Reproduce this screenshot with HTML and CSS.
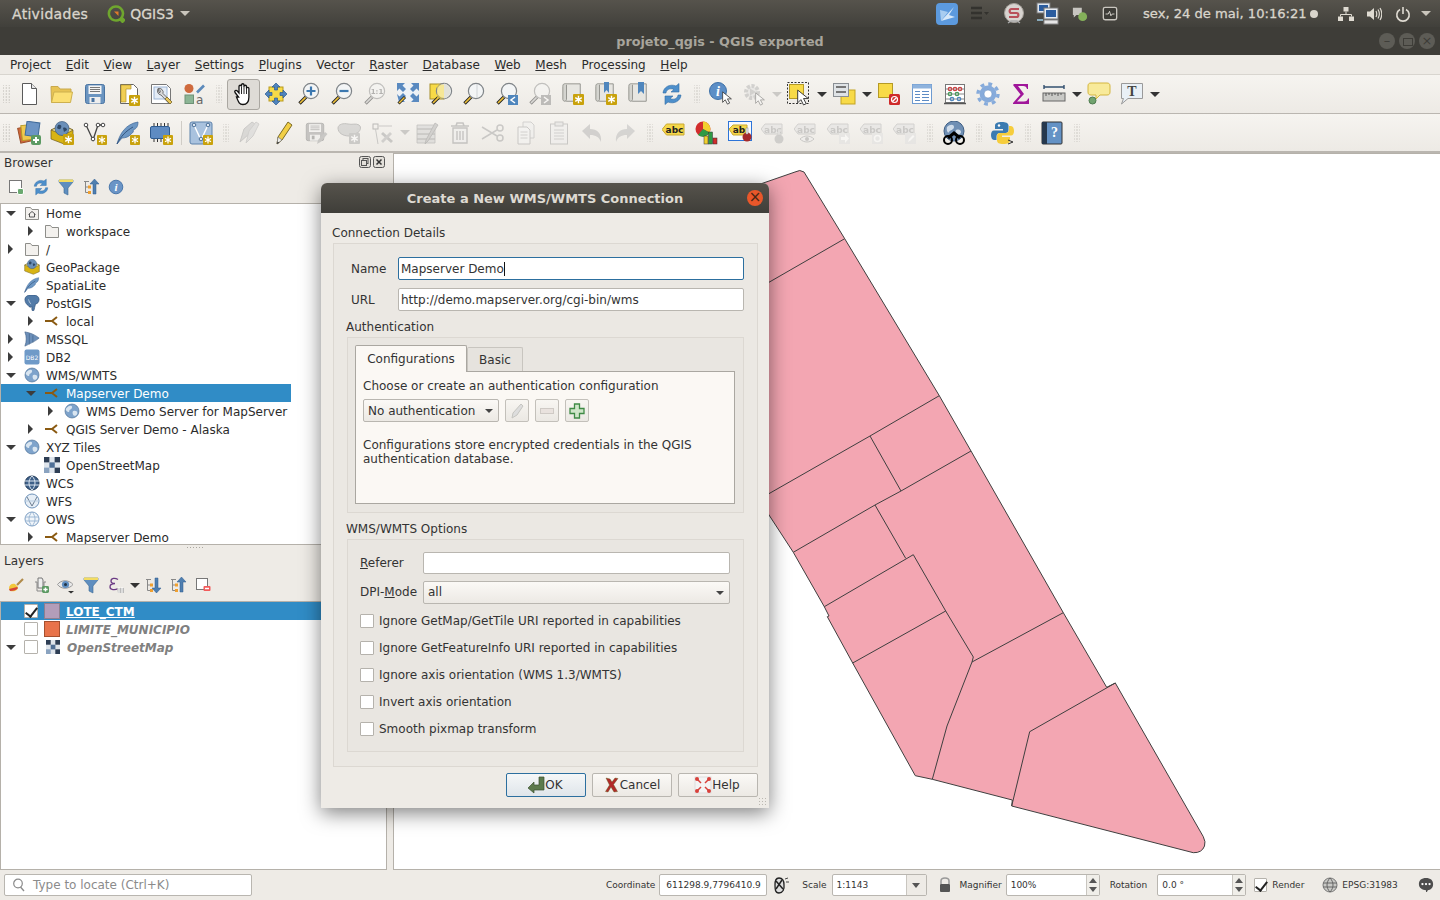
FILE: index.html
```html
<!DOCTYPE html>
<html lang="en">
<head>
    <meta charset="UTF-8">
    <meta name="viewport" content="width=device-width, initial-scale=1.0">
    <title>projeto_qgis - QGIS exported</title>
    <link rel="stylesheet" href="styles.css">
</head>
<body>
    <!-- icon sheet -->
    <svg class="sheet" xmlns="http://www.w3.org/2000/svg">
        <defs>
            <symbol id="badge" viewBox="0 0 10 10"><rect width="10" height="10" rx="1" fill="#c9a20c"/><path d="M5 1.5v7M2 3.2l6 3.6M8 3.2L2 6.8" stroke="#fff" stroke-width="1.3"/></symbol>
            <symbol id="plusbadge" viewBox="0 0 10 10"><rect width="10" height="10" rx="2" fill="#5c9a63"/><path d="M5 2v6M2 5h6" stroke="#fff" stroke-width="2"/></symbol>
            <symbol id="mag" viewBox="0 0 24 24"><path d="M9 15L2.5 21.5" stroke="#222" stroke-width="3.4"/><path d="M8.6 15.4L3 21" stroke="#f0c23a" stroke-width="1.6"/><circle cx="14" cy="9" r="7.6" fill="#f3f5f6" stroke="#7f8488" stroke-width="1.2"/></symbol>

            <symbol id="new" viewBox="0 0 24 24"><path d="M5.5 1.5h9l5 5v16h-14z" fill="#fff" stroke="#5a5a5a"/><path d="M14.5 1.5v5h5" fill="#e6e6e6" stroke="#5a5a5a"/></symbol>
            <symbol id="open" viewBox="0 0 24 24"><path d="M1.5 20.5L1 4.5h7l2 2.5h11v4" fill="#e7c354" stroke="#c9a94d"/><path d="M1.5 20.5L4 10h18.5l-2 10.5z" fill="#fbdf73" stroke="#cdb04f"/></symbol>
            <symbol id="save" viewBox="0 0 24 24"><rect x="2.5" y="2.5" width="19" height="19" rx="2" fill="#6a94c0" stroke="#4a74a2"/><rect x="5.5" y="3.5" width="13" height="8.5" fill="#f4f4f4"/><path d="M7 5.5h10M7 7.5h10M7 9.5h10" stroke="#777"/><rect x="6.5" y="15" width="11" height="6.5" fill="#eee"/><rect x="8.5" y="16" width="3" height="4" fill="#4a74a2"/></symbol>
            <symbol id="newlayout" viewBox="0 0 24 24"><path d="M4.5 2.5h13l4 4v15h-17z" fill="#fff" stroke="#666"/><path d="M5 3h10v4h-5v13H5z" fill="#f1cf55" stroke="#b4962d" stroke-width=".7"/><use href="#badge" x="13" y="13" width="11" height="11"/></symbol>
            <symbol id="layoutmgr" viewBox="0 0 24 24"><path d="M2.5 2.5h15l4 4v15h-19z" fill="#fff" stroke="#777"/><rect x="5" y="5" width="13" height="12" fill="#e4ecf6" stroke="#9db6d6"/><path d="M9 7a4 4 0 0 0 3 6l8 8.500 2-2-8-8a4 4 0 0 0-5-5l2.500 2.500-1 2z" fill="#d8d8d8" stroke="#555" stroke-width=".8"/><path d="M16 17l5 5 2-2-5-5z" fill="#e8c558" stroke="#6d5a1f" stroke-width=".7"/></symbol>
            <symbol id="style" viewBox="0 0 24 24"><circle cx="7" cy="6.500" r="4.500" fill="#cf6a3d"/><path d="M15 10.500l7-7" stroke="#5c8abb" stroke-width="2.600"/><rect x="3" y="13" width="8.500" height="8.500" fill="#8cb595" stroke="#6e9277"/><text x="14" y="22" class="svg-a">a</text></symbol>
            <symbol id="hand" viewBox="0 0 24 24"><path d="M7.500 15L4 10.500c-1-1.500 1-3 2.300-1.500L8 11V4.500c0-1.700 2.500-1.700 2.500 0V3c0-1.700 2.500-1.700 2.500 0v1.500c0-1.700 2.500-1.700 2.500 0V6.500c0-1.600 2.400-1.600 2.400 0V15c0 4.500-2 7.500-6 7.500-3.500 0-4.300-2-6.400-7.500z" fill="#fff" stroke="#111" stroke-width="1.300"/><path d="M10.500 4.500V12M13 4v8M15.500 5v7" stroke="#111" stroke-width=".9"/></symbol>
            <symbol id="pansel" viewBox="0 0 24 24"><rect x="5" y="5" width="14" height="14" fill="#f7da47" stroke="#b89a1c"/><g fill="#4f83bd" stroke="#2d5b8f" stroke-width=".7"><path d="M12 1l4 4h-2.500v3h-3V5H8z"/><path d="M12 23l4-4h-2.500v-3h-3v3H8z"/><path d="M1 12l4-4v2.500h3v3H5V16z"/><path d="M23 12l-4-4v2.500h-3v3h3V16z"/></g></symbol>
            <symbol id="zoomin" viewBox="0 0 24 24"><use href="#mag" width="24" height="24"/><path d="M14 4.500v9M9.500 9h9" stroke="#3c78b0" stroke-width="2.200"/></symbol>
            <symbol id="zoomout" viewBox="0 0 24 24"><use href="#mag" width="24" height="24"/><path d="M9.500 9h9" stroke="#3c78b0" stroke-width="2.200"/></symbol>
            <symbol id="zoom11" viewBox="0 0 24 24"><use href="#mag" width="24" height="24"/><text x="14" y="12" class="svg-11">1:1</text></symbol>
            <symbol id="zoomfull" viewBox="0 0 24 24"><rect x="1.500" y="1.500" width="21" height="18" fill="#eef2f6"/><g fill="#5a8ac0"><path d="M1 1h8L6.500 3.500 10 7 7 10 3.500 6.500 1 9z"/><path d="M23 1h-8l2.500 2.500L14 7l3 3 3.500-3.500L23 9z"/><path d="M23 20h-8l2.500-2.500L14 14l3-3 3.500 3.500L23 12z"/><path d="M1 12l2.500 2.500L7 11l3 3-3.500 3.500L9 20H3z"/></g><path d="M9 15L2.500 21.500" stroke="#222" stroke-width="3"/><path d="M8.500 15.500L3 21" stroke="#f0c23a" stroke-width="1.400"/></symbol>
            <symbol id="zoomsel" viewBox="0 0 24 24"><rect x="1" y="2" width="14" height="15" fill="#f7da47" stroke="#a68e2a"/><use href="#mag" x="1" y="0" width="24" height="24"/><path d="M15 1.500a7.600 7.600 0 0 1 0 15z" fill="#e2e2da"/><path d="M8 2.500h7v14H8z" fill="#f7da47" opacity=".55"/></symbol>
            <symbol id="zoomlayer" viewBox="0 0 24 24"><use href="#mag" width="24" height="24"/><path d="M15 2v14" stroke="#cfd3d6"/></symbol>
            <symbol id="zoomlast" viewBox="0 0 24 24"><use href="#mag" width="24" height="24"/><rect x="13" y="13" width="10" height="10" fill="#4f86bd"/><path d="M20 15l-4 3 4 3" fill="none" stroke="#fff" stroke-width="1.500"/></symbol>
            <symbol id="zoomnext" viewBox="0 0 24 24"><use href="#mag" width="24" height="24"/><rect x="13" y="13" width="10" height="10" fill="#4f86bd"/><path d="M16 15l4 3-4 3" fill="none" stroke="#fff" stroke-width="1.500"/></symbol>
            <symbol id="scroll" viewBox="0 0 24 24"><path d="M4 2h17v19H6.500C5 21 4 20 4 18z" fill="#e7e6e1" stroke="#8f8f8a"/><path d="M4 2c-2 0-2 2-2 3v14c0 1 1 2 2 2 1 0 2-1 2-2V3" fill="#d4d4cf" stroke="#8f8f8a"/></symbol>
            <symbol id="bmnew" viewBox="0 0 24 24"><use href="#scroll" width="22" height="22"/><use href="#badge" x="12" y="12" width="11" height="11"/></symbol>
            <symbol id="bmshow" viewBox="0 0 24 24"><use href="#scroll" width="22" height="22"/><path d="M10 0h5v11l-2.500-3L10 11z" fill="#4f86bd"/><use href="#badge" x="12" y="12" width="11" height="11"/></symbol>
            <symbol id="bmlist" viewBox="0 0 24 24"><use href="#scroll" width="22" height="22"/><path d="M11 0h6v12l-3-3-3 3z" fill="#4f86bd"/></symbol>
            <symbol id="refresh" viewBox="0 0 24 24"><path d="M3 11C3.500 5 10 1.500 16 4l3-2.500V10h-8l3-2.500C10 5.500 6 8 6 11z" fill="#4d8fcb" stroke="#2f6ba5" stroke-width=".6"/><path d="M21 13c-.5 6-7 9.500-13 7l-3 2.500V14h8l-3 2.500c4 2 8-.5 8-3.500z" fill="#4d8fcb" stroke="#2f6ba5" stroke-width=".6"/></symbol>
            <symbol id="cursor" viewBox="0 0 12 16"><path d="M1 1v12l3-3 2.500 5 2.500-1.200L6.500 9H11z" fill="#fff" stroke="#333" stroke-width=".9"/></symbol>
            <symbol id="identify" viewBox="0 0 24 24"><circle cx="9" cy="9" r="8.500" fill="#5c8ec6" stroke="#3f71a8"/><text x="9" y="14" class="svg-i">i</text><use href="#cursor" x="12" y="9" width="12" height="14"/></symbol>
            <symbol id="action" viewBox="0 0 24 24"><circle cx="10" cy="10" r="6" fill="#ddd" stroke="#aaa" stroke-width="4" stroke-dasharray="3 1.500"/><path d="M8 6.500l6 3.500-6 3.500z" fill="#aaa"/><use href="#cursor" x="12" y="10" width="12" height="14"/></symbol>
            <symbol id="select" viewBox="0 0 24 24"><rect x=".5" y=".5" width="21" height="21" fill="none" stroke="#333" stroke-dasharray="2 1.500"/><rect x="2.500" y="2.500" width="14" height="14" fill="#f8da47" stroke="#b59a25"/><use href="#cursor" x="9" y="7" width="14" height="17"/></symbol>
            <symbol id="selectform" viewBox="0 0 24 24"><rect x="9" y="8" width="14" height="14" fill="#f8da47" stroke="#c3a322"/><rect x="1.500" y="1.500" width="15" height="13" fill="#dfe3e6" stroke="#8a8f94"/><path d="M4 5h10M4 10h10" stroke="#777" stroke-width="2"/></symbol>
            <symbol id="deselect" viewBox="0 0 24 24"><rect x="1.500" y="1.500" width="14" height="14" fill="#f8da47" stroke="#b59a25"/><rect x="12" y="12" width="11" height="11" rx="1.500" fill="#cf2a2a"/><circle cx="17.500" cy="17.500" r="3" fill="none" stroke="#fff" stroke-width="1.200"/><path d="M15.500 19.500l4-4" stroke="#fff" stroke-width="1.200"/></symbol>
            <symbol id="attr" viewBox="0 0 24 24"><rect x="2.500" y="2.500" width="19" height="19" fill="#fff" stroke="#6d9ad0"/><rect x="2.500" y="2.500" width="19" height="4" fill="#8fb3dd"/><path d="M5 9.500h5M12 9.500h7M5 12.500h5M12 12.500h7M5 15.500h5M12 15.500h7M5 18.500h5M12 18.500h7" stroke="#5e8cc4"/></symbol>
            <symbol id="stats" viewBox="0 0 24 24"><rect x="2.500" y="2.500" width="19" height="18" fill="#fff" stroke="#777"/><path d="M1 21.500h22" stroke="#555" stroke-width="1.500"/><path d="M3 7h18M3 12h18M3 17h18" stroke="#888"/><g fill="none" stroke-width="1.300"><circle cx="7" cy="7" r="1.700" stroke="#c44"/><circle cx="12" cy="7" r="1.700" stroke="#c44"/><circle cx="17" cy="7" r="1.700" stroke="#c44"/><circle cx="7" cy="12" r="1.700" stroke="#4a9a5c"/><circle cx="14" cy="12" r="1.700" stroke="#4a9a5c"/><circle cx="9" cy="17" r="1.700" stroke="#4f86bd"/><circle cx="16" cy="17" r="1.700" stroke="#4f86bd"/></g></symbol>
            <symbol id="toolbox" viewBox="0 0 24 24"><circle cx="12" cy="12" r="10" fill="none" stroke="#86abdb" stroke-width="3.400" stroke-dasharray="3.800 4.050"/><circle cx="12" cy="12" r="6.200" fill="#fff" stroke="#86abdb" stroke-width="4.400"/><circle cx="12" cy="12" r="4" fill="none" stroke="#5f88bd" stroke-width=".5"/></symbol>
            <symbol id="sigma" viewBox="0 0 24 24"><path d="M5 2h14v5h-1c-.5-2-1.500-3-4-3H9l6 8-7 7.500h7c2.500 0 3.500-1 4-3h1V22H4v-1l7.500-8.500L4 3z" fill="#a0169a"/></symbol>
            <symbol id="ruler" viewBox="0 0 24 24"><path d="M2 5h20M2 3v4M22 3v4" stroke="#33506f" stroke-width="1.400"/><rect x="1" y="11" width="22" height="8" fill="#c9c9c6" stroke="#666"/><path d="M4 11v3M7 11v2M10 11v3M13 11v2M16 11v3M19 11v2" stroke="#555"/></symbol>
            <symbol id="note" viewBox="0 0 24 24"><path d="M4 1h16c2 0 3 1 3 3v6c0 2-1 3-3 3h-7l-4 4v-4H4c-2 0-3-1-3-3V4c0-2 1-3 3-3z" fill="#f8ea9a" stroke="#d4b63e"/><circle cx="5.500" cy="18.500" r="3.500" fill="#71a36f" stroke="#4e7b4f"/></symbol>
            <symbol id="textann" viewBox="0 0 24 24"><path d="M1.500 1.500h21v15H8L1.500 22l2-5.500h-2z" fill="#e9f0f6" stroke="#9a9a9a"/><text x="12" y="14" class="svg-t">T</text></symbol>

            <symbol id="addlayers" viewBox="0 0 24 24"><rect x="2" y="6" width="12" height="15" transform="rotate(-12 8 13)" fill="#d0683a" stroke="#9d4d28"/><rect x="4.500" y="4" width="13" height="15" transform="rotate(-6 10 11)" fill="#f0c84d" stroke="#b59a25"/><rect x="9" y="1" width="13" height="14" transform="rotate(8 15 8)" fill="#6c94c4" stroke="#3f6a9a"/><use href="#plusbadge" x="14" y="14" width="10" height="10"/></symbol>
            <symbol id="gpkgbox" viewBox="0 0 24 24"><path d="M1 9l11-5 11 5v10l-9 4-13-5z" fill="#d8b414" stroke="#6d5a1f" stroke-width=".7"/><path d="M1 9l13 5 9-5-11-5z" fill="#f3e59a" stroke="#6d5a1f" stroke-width=".7"/><circle cx="12" cy="7.500" r="7" fill="#6a8fb9" stroke="#3f5d80" stroke-width=".7"/><path d="M8 4c3-1 4 1 3 3s-3 1-4 0M13 7c2-1 4 0 4 2l-3 2z" fill="#2f4866"/></symbol>
            <symbol id="gpkg" viewBox="0 0 24 24"><use href="#gpkgbox" width="24" height="24"/><use href="#badge" x="13" y="13" width="11" height="11"/></symbol>
            <symbol id="vline" viewBox="0 0 24 24"><path d="M3 4l7 15 5-15h5" fill="none" stroke="#444" stroke-width="1.300"/><g fill="#fff" stroke="#444"><circle cx="3" cy="4" r="1.800"/><circle cx="10" cy="18" r="1.800"/><circle cx="15" cy="4" r="1.800"/><circle cx="20" cy="4" r="1.800"/></g><use href="#badge" x="14" y="14" width="10" height="10"/></symbol>
            <symbol id="feather" viewBox="0 0 24 24"><path d="M1 23C4 12 10 3 22 1c0 5-2 7-5 8 1 1 0 3-2 4-2 3-6 4-9 4z" fill="#6d97c4" stroke="#41699a" stroke-width=".7"/><path d="M1 23C5 15 10 10 17 6" fill="none" stroke="#2f4f78" stroke-width=".9"/></symbol>
            <symbol id="feathernew" viewBox="0 0 24 24"><use href="#feather" width="24" height="24"/><use href="#badge" x="14" y="14" width="10" height="10"/></symbol>
            <symbol id="chip" viewBox="0 0 24 24"><rect x="1.500" y="5.500" width="19" height="12" rx="1.500" fill="#5e8bc2" stroke="#2f5b8f"/><path d="M5 2v3M8.500 2v3M12 2v3M15.500 2v3M19 2v3M5 18v3M8.500 18v3M12 18v3" stroke="#333"/><use href="#badge" x="14" y="14" width="10" height="10"/></symbol>
            <symbol id="vbox" viewBox="0 0 24 24"><rect x="1" y="1" width="22" height="22" rx="2" fill="#a9c2de" stroke="#5d82ab"/><path d="M5 4l7 15 7-15" fill="none" stroke="#fff" stroke-width="1.400"/><g fill="#dfe8f2" stroke="#4b6f97"><circle cx="5" cy="4" r="1.800"/><circle cx="12" cy="18" r="1.800"/><circle cx="19" cy="4" r="1.800"/></g><use href="#badge" x="14" y="14" width="10" height="10"/></symbol>
            <symbol id="pencils" viewBox="0 0 24 24"><path d="M2 21L6 8l8-7 3 2-6 10z" fill="#bbb" stroke="#999"/><path d="M8 22l3-12 7-9 3 2-6 12z" fill="#ccc" stroke="#aaa"/></symbol>
            <symbol id="pencil" viewBox="0 0 24 24"><path d="M6 23l1-7L17 1l4 3L11 19z" fill="#f2cf45" stroke="#7a6a25"/><path d="M6 23l1-7 4 3z" fill="#eee" stroke="#777" stroke-width=".7"/><path d="M6 23l.4-2.500 2 1.300z" fill="#333"/></symbol>
            <symbol id="editsave" viewBox="0 0 24 24"><use href="#save" width="22" height="22"/><path d="M13 23l1-4 7-8 2.500 2-7 8z" fill="#999"/></symbol>
            <symbol id="blob" viewBox="0 0 24 24"><path d="M1 7c0-4 6-5 10-4s8-1 11 1 1 7-2 8-2 3-8 3-11-3-11-8z" fill="#bbb" stroke="#888"/><use href="#badge" x="12" y="12" width="11" height="11"/></symbol>
            <symbol id="vtool" viewBox="0 0 24 24"><rect x="3" y="3" width="5" height="5" fill="none" stroke="#777"/><path d="M9 5h13M5.500 8L8 23" stroke="#999"/><path d="M11 13l10 9 2-2-10-9z" fill="#999"/><path d="M11 20l9-9 2 2-9 9z" fill="#aaa"/></symbol>
            <symbol id="edittable" viewBox="0 0 24 24"><path d="M2 4h18v4H2zM2 8h18v5H2zM2 13h18v5H2zM2 18h18v4H2z" fill="#ccc" stroke="#888" stroke-width=".8"/><path d="M10 23l1-4L20 2l3 2-10 16z" fill="#aaa" stroke="#777" stroke-width=".8"/></symbol>
            <symbol id="trash" viewBox="0 0 24 24"><path d="M3 5h18M8 5l1-3h6l1 3" fill="none" stroke="#a88" stroke-width="1.600"/><path d="M5 7h14v15H5z" fill="#eee" stroke="#a88" stroke-width="1.400"/><path d="M9 10v9M12 10v9M15 10v9" stroke="#a88" stroke-width="1.400"/></symbol>
            <symbol id="scissors" viewBox="0 0 24 24"><path d="M1 6l15 9M1 18l15-9" stroke="#999" stroke-width="1.500"/><circle cx="19" cy="7" r="3" fill="none" stroke="#999" stroke-width="1.500"/><circle cx="19" cy="17" r="3" fill="none" stroke="#999" stroke-width="1.500"/></symbol>
            <symbol id="copy" viewBox="0 0 24 24"><path d="M9 1h8l3 3v13H9z" fill="#eee" stroke="#aaa"/><path d="M4 6h9l3 3v14H4z" fill="#f5f5f5" stroke="#999"/><path d="M6.500 11h7M6.500 14h7M6.500 17h7" stroke="#aaa"/></symbol>
            <symbol id="paste" viewBox="0 0 24 24"><rect x="3.500" y="3" width="17" height="20" fill="#eee" stroke="#999"/><rect x="8" y="1" width="8" height="4" fill="#ddd" stroke="#999"/><path d="M7 9h10M7 12h10M7 15h10M7 18h10" stroke="#aaa"/></symbol>
            <symbol id="undo" viewBox="0 0 24 24"><path d="M2 10l8-7v5c7 0 12 4 11 13-2-5-5-7-11-7v4z" fill="#b3aaa0"/></symbol>
            <symbol id="redo" viewBox="0 0 24 24"><path d="M22 10l-8-7v5C7 8 2 12 3 21c2-5 5-7 11-7v4z" fill="#b3b3ab"/></symbol>
            <symbol id="abc" viewBox="0 0 24 24"><path d="M0 8.500L4.500 3H22v11H4.500z" fill="#f6d84a" stroke="#c9a933"/><text x="12.500" y="12" class="svg-abc">abc</text></symbol>
            <symbol id="chart" viewBox="0 0 24 24"><circle cx="8" cy="8" r="7.500" fill="#d22d2d"/><path d="M8 8V.5a7.500 7.500 0 0 1 6.500 11z" fill="#f2d02e"/><path d="M8 8l6.500 3.500A7.500 7.500 0 0 1 3 14z" fill="#2f9a45"/><rect x="9" y="15" width="4" height="8" fill="#f2d02e" stroke="#333" stroke-width=".5"/><rect x="13.500" y="11" width="4" height="12" fill="#2f9a45" stroke="#333" stroke-width=".5"/><rect x="18" y="17" width="4" height="6" fill="#d22d2d" stroke="#333" stroke-width=".5"/></symbol>
            <symbol id="abcpin" viewBox="0 0 24 24"><rect x=".5" y=".5" width="23" height="19" fill="#f9fbff" stroke="#2d74d8" stroke-width="1"/><path d="M1 8l4-4h14v10H5z" fill="#f6d84a" stroke="#c9a933"/><text x="11" y="12" class="svg-abc">ab</text><circle cx="19" cy="16" r="4.500" fill="#a52a2a"/><rect x="18" y="7" width="2" height="6" fill="#eee" stroke="#888" stroke-width=".5"/></symbol>
            <symbol id="abcgrey" viewBox="0 0 24 24"><path d="M0 8L4 3h17v10H4z" fill="#ddd" stroke="#aaa"/><text x="12" y="11.500" class="svg-abc grey">abc</text></symbol>
            <symbol id="abcpin2" viewBox="0 0 24 24"><use href="#abcgrey" width="24" height="24"/><circle cx="18" cy="18" r="4.500" fill="#b0a5a5"/><rect x="17" y="8" width="2" height="6" fill="#ddd" stroke="#999" stroke-width=".5"/></symbol>
            <symbol id="abceye" viewBox="0 0 24 24"><use href="#abcgrey" width="24" height="24"/><path d="M6 18c4-4 10-4 14 0-4 4-10 4-14 0z" fill="#eee" stroke="#999"/><circle cx="13" cy="18" r="2" fill="#999"/></symbol>
            <symbol id="abcmove" viewBox="0 0 24 24"><use href="#abcgrey" width="24" height="24"/><rect x="12" y="12" width="11" height="11" fill="#ddd"/><path d="M14 16h4v-3l4 4.500-4 4.500v-3h-4z" fill="#fff"/></symbol>
            <symbol id="abcrot" viewBox="0 0 24 24"><use href="#abcgrey" width="24" height="24"/><rect x="12" y="12" width="11" height="11" fill="#ddd"/><circle cx="17.500" cy="17.500" r="3" fill="none" stroke="#fff" stroke-width="1.600"/></symbol>
            <symbol id="abcedit" viewBox="0 0 24 24"><use href="#abcgrey" width="24" height="24"/><rect x="12" y="12" width="11" height="11" fill="#ddd"/><path d="M15 21l1-3 4-4 1.500 1.500-4 4z" fill="#fff"/></symbol>
            <symbol id="globe" viewBox="0 0 24 24"><circle cx="12" cy="12" r="10.500" fill="#7ea3cb" stroke="#4c6f96"/><path d="M7 5c3-2 6-1 5 2s-4 2-4 5-4 1-5-1 2-5 4-6zM14 12c3-1 6 0 6 3s-3 5-5 4-3-6-1-7z" fill="#d9e5f0"/></symbol>
            <symbol id="bikeglobe" viewBox="0 0 24 24"><circle cx="12" cy="10" r="10" fill="#6f8fb4" stroke="#3f5f85"/><path d="M5 6c3-3 7-3 7 0s-4 3-5 5-3-2-2-5zM14 9c3-1 5 0 5 2s-3 3-4 2-2-3-1-4z" fill="#cfdcea"/><circle cx="6" cy="19" r="4" fill="none" stroke="#000" stroke-width="2"/><circle cx="18" cy="19" r="4" fill="none" stroke="#000" stroke-width="2"/><path d="M6 17l6-5 6 5" fill="none" stroke="#000" stroke-width="3"/></symbol>
            <symbol id="python" viewBox="0 0 24 24"><path d="M11 1c-5 0-7 1-7 4v3h8v1.500H3c-2 0-3 2-3 4.500s1 5 3 5h2.500v-3.500c0-2 1.500-3.500 3.500-3.500h5.500c2 0 3-1 3-3V4.500C17.500 2 14.500 1 11 1z" fill="#3b7bb1"/><path d="M12 23c5 0 7-1 7-4v-3h-8v-1.500h9c2 0 3-2 3-4.500s-1-5-3-5h-2v3.500c0 2-1.500 3.500-3.500 3.500H9c-2 0-3 1-3 3v4.500c0 2.500 2.500 3.500 6 3.500z" fill="#f6cd3c"/><circle cx="8" cy="4.500" r="1.200" fill="#fff"/><path d="M17 19l5 2-5 2" fill="none" stroke="#333"/></symbol>
            <symbol id="helpbook" viewBox="0 0 24 24"><rect x="2" y="1" width="20" height="22" rx="1" fill="#6492c5" stroke="#333"/><rect x="2" y="1" width="5" height="22" fill="#26384d"/><text x="14.500" y="16" class="svg-q">?</text></symbol>

            <symbol id="addrect" viewBox="0 0 18 18"><rect x="2.500" y="2.500" width="12" height="12" fill="#fff" stroke="#777"/><rect x="10.500" y="10.500" width="6" height="6" rx="1.500" fill="#6aa96f" stroke="#fff"/></symbol>
            <symbol id="filter" viewBox="0 0 18 18"><path d="M2 2h14v2l-5 6v7l-4-2v-5L2 4z" fill="#5f8ebf" stroke="#3b6996" stroke-width=".6"/><rect x="2" y="1.500" width="14" height="2.500" fill="#f3dc62"/></symbol>
            <symbol id="collapseup" viewBox="0 0 18 18"><path d="M2 3.500h5M3.500 3.500v11h4M3.500 9h4" fill="none" stroke="#888"/><rect x="6" y="7.500" width="3" height="3" fill="#f0a030"/><rect x="6" y="13" width="3" height="3" fill="#f0a030"/><path d="M12.500 1L17 6h-3v10h-3V6H8z" fill="#4f7fb0" stroke="#2d5b8f" stroke-width=".5"/></symbol>
            <symbol id="expanddown" viewBox="0 0 18 18"><path d="M2 3.500h5M3.500 3.500v11h4M3.500 9h4" fill="none" stroke="#888"/><rect x="6" y="7.500" width="3" height="3" fill="#f0a030"/><rect x="6" y="13" width="3" height="3" fill="#f0a030"/><path d="M12.500 17L17 12h-3V2h-3v10H8z" fill="#4f7fb0" stroke="#2d5b8f" stroke-width=".5"/></symbol>
            <symbol id="info" viewBox="0 0 18 18"><circle cx="9" cy="9" r="6.800" fill="#6a94c6" stroke="#4a77ab"/><text x="9" y="12.500" class="svg-i small">i</text></symbol>
            <symbol id="brush" viewBox="0 0 18 18"><path d="M2 12c0-3 3-5 6-4l3 3c0 3-3 5-8 4z" fill="#f2c83a"/><path d="M2 13l8-2 1 1c-1 2-4 3-8 3z" fill="#d4453a"/><path d="M10 9l6-6" stroke="#b08a4a" stroke-width="2.200"/></symbol>
            <symbol id="addgroup" viewBox="0 0 18 18"><path d="M3 6h2v9h7V6h2" fill="none" stroke="#888"/><path d="M6 2h4l1 2v8H6z" fill="#eee" stroke="#777"/><use href="#plusbadge" x="10" y="10" width="7" height="7"/></symbol>
            <symbol id="eye" viewBox="0 0 18 18"><path d="M.5 8.500C4 3.500 12 3.500 16 8.500c-4 5-12 5-15.500 0z" fill="#e8e8e8" stroke="#999"/><circle cx="8.500" cy="8.500" r="3.600" fill="#5f8ec0"/><circle cx="8.500" cy="8.500" r="1.500" fill="#234"/><path d="M11 15h6l-3 2.500z" fill="#333"/></symbol>
            <symbol id="epsilon" viewBox="0 0 18 18"><path d="M11 3.500C8 1.500 4 2 4 5c0 2 2 2.500 4 2.500-3 0-5 1-5 3.500 0 3 5 3.500 8 1.500" fill="none" stroke="#6b3a84" stroke-width="1.300"/><path d="M10 12h7v5h-6z" fill="#bbb"/><path d="M12 11v6M15 11v6" stroke="#fff"/></symbol>
            <symbol id="removegroup" viewBox="0 0 18 18"><rect x="2.500" y="2.500" width="11" height="11" fill="#fff" stroke="#777"/><rect x="9.500" y="10" width="7" height="5" rx="1" fill="#f25a5a"/><path d="M11 12.500h4" stroke="#fff" stroke-width="1.500"/></symbol>

            <symbol id="folder" viewBox="0 0 16 16"><path d="M1.500 2.500h5l1.500 2h6.500v10h-13z" fill="#f3f1ee" stroke="#8e8e8a"/></symbol>
            <symbol id="homefolder" viewBox="0 0 16 16"><use href="#folder" width="16" height="16"/><path d="M4.500 9.500L8 6.500l3.500 3M5.500 9v3h5V9" fill="none" stroke="#444" stroke-width=".9"/></symbol>
            <symbol id="elephant" viewBox="0 0 18 18"><path d="M1 5c0-3 3-5 6-5h4c3 0 6 2 6 5 0 3-2 5-4 5l-1 4c-.5 3-1 4-2 4s-1.500-2-1-5C8 14 6 14 5 12 3 11 1 8 1 5z" fill="#527ba8" stroke="#2f4f78" stroke-width=".7"/><path d="M5 5c1 2 1 4 3 5" fill="none" stroke="#cfdcea" stroke-width=".8"/></symbol>
            <symbol id="conn" viewBox="0 0 16 16"><path d="M1 8h7l5-4M8 8l5 4" fill="none" stroke="#8a5a12" stroke-width="2"/></symbol>
            <symbol id="sql" viewBox="0 0 18 18"><path d="M1 1c6 1 11 3 16 7-5 4-10 6-16 9 2-5 2-11 0-16z" fill="#6c8fb9" stroke="#3d5f88" stroke-width=".7"/><path d="M6 3v12M10 5v8" stroke="#3d5f88" stroke-width=".7"/></symbol>
            <symbol id="db2" viewBox="0 0 16 16"><rect x=".5" y=".5" width="15" height="15" rx="2" fill="#6f9ac8"/><text x="8" y="10.500" class="svg-db2">DB2</text></symbol>
            <symbol id="tiles" viewBox="0 0 14 14"><rect width="14" height="14" fill="#dfe5ec"/><rect width="4.700" height="4.700" fill="#2e3e54"/><rect x="9.300" width="4.700" height="4.700" fill="#2e3e54"/><rect x="4.700" y="4.700" width="4.700" height="4.700" fill="#4f6f96"/><rect y="9.300" width="4.700" height="4.700" fill="#8aa3c0"/><rect x="9.300" y="9.300" width="4.700" height="4.700" fill="#2e3e54"/></symbol>
            <symbol id="wcs" viewBox="0 0 16 16"><circle cx="8" cy="8" r="7" fill="#3d5f88" stroke="#243d5b"/><path d="M1 6h14M1 10h14M8 1c-4 4-4 10 0 14M8 1c4 4 4 10 0 14" fill="none" stroke="#dce6f0"/></symbol>
            <symbol id="wfs" viewBox="0 0 16 16"><circle cx="8" cy="8" r="7" fill="#e6eef6" stroke="#6f93ba"/><path d="M3 4l5 9 5-9" fill="none" stroke="#6b7c8f"/><path d="M1 8h14" stroke="#b8cce0"/></symbol>
            <symbol id="ows" viewBox="0 0 16 16"><circle cx="8" cy="8" r="7" fill="#f0f5fa" stroke="#7a9cc2"/><path d="M1 6h14M1 10h14M8 1c-4 4-4 10 0 14M8 1c4 4 4 10 0 14" fill="none" stroke="#9db8d4"/></symbol>

            <symbol id="qgis" viewBox="0 0 18 18"><path d="M9 1.500a7 7 0 1 0 4 12.700l2.500 2.500 1.500-1.500-2.500-2.500A7 7 0 0 0 9 1.500z" fill="none" stroke="#6fa62e" stroke-width="2.600"/><path d="M7 6.500h4.500V11z" fill="#e07b2a"/></symbol>
            <symbol id="triss" viewBox="0 0 22 22"><rect width="22" height="22" rx="4" fill="#5c9ade"/><path d="M5 18L18 4l-5 8 6 2z" fill="#d7e8f8"/><path d="M5 18L4 7l8 2z" fill="#a9cdf0"/></symbol>
            <symbol id="menulines" viewBox="0 0 18 16"><path d="M0 2h11M0 7h11M0 12h11" stroke="#33322e" stroke-width="2.600"/><path d="M13 6h5l-2.500 3z" fill="#33322e"/></symbol>
            <symbol id="skype" viewBox="0 0 24 24"><circle cx="12" cy="11" r="9.500" fill="#d8d4d0" stroke="#a5a09a"/><path d="M17 7H9.500c-2.500 0-2.500 4 0 4h5c2.500 0 2.500 4 0 4H7" fill="none" stroke="#b9505a" stroke-width="2.200"/><path d="M6 21l3-2h6l3 2" fill="none" stroke="#aaa" stroke-width="1.500"/></symbol>
            <symbol id="netcomp" viewBox="0 0 24 24"><rect x="1" y="1" width="13" height="10" fill="#dfe6ef" stroke="#777"/><rect x="3" y="3" width="9" height="6" fill="#2a5c9e"/><rect x="8" y="6" width="14" height="11" fill="#e6ebf0" stroke="#777"/><rect x="10" y="8" width="10" height="7" fill="#2a5c9e"/><rect x="8" y="18" width="14" height="4" fill="#e6e6e6" stroke="#888"/><path d="M1 18h6" stroke="#8ab" stroke-width="2"/></symbol>
            <symbol id="chatgreen" viewBox="0 0 18 18"><path d="M1 2h10v8H5l-3 3v-3H1z" fill="#c7c5c0"/><circle cx="12" cy="12" r="5" fill="#84b05a"/></symbol>
            <symbol id="sysmon" viewBox="0 0 18 18"><rect x="1.500" y="1.500" width="15" height="14" rx="2" fill="#3e3d38" stroke="#c9c6bf" stroke-width="1.500"/><path d="M4 9h3l1.500-3 1.500 5 1.500-2h2.500" fill="none" stroke="#dfdcd5"/></symbol>
            <symbol id="network" viewBox="0 0 16 16"><g fill="#dfdbd2"><rect x="5.500" y="1" width="5" height="4.500"/><rect y="10.500" width="5" height="4.500"/><rect x="11" y="10.500" width="5" height="4.500"/></g><path d="M8 5.500v3M2.500 10.500v-2h11v2" fill="none" stroke="#dfdbd2"/></symbol>
            <symbol id="volume" viewBox="0 0 16 16"><path d="M1 5.500h3L8 2v12L4 10.500H1z" fill="#dfdbd2"/><path d="M10 5c1 2 1 4 0 6M12 3.500c1.800 3 1.800 6 0 9M14 2c2.400 4 2.400 8 0 12" fill="none" stroke="#dfdbd2" stroke-width="1.200"/></symbol>
            <symbol id="power" viewBox="0 0 16 16"><path d="M5 3.500a6.200 6.200 0 1 0 6 0" fill="none" stroke="#dfdbd2" stroke-width="1.600"/><path d="M8 1v7" stroke="#dfdbd2" stroke-width="1.600"/></symbol>

            <symbol id="dockfloat" viewBox="0 0 12 12"><rect x=".5" y=".5" width="11" height="11" rx="2" fill="#e3e0da" stroke="#555"/><rect x="4" y="2.500" width="5" height="5" fill="none" stroke="#555"/><rect x="2.500" y="4.500" width="5" height="5" fill="#e3e0da" stroke="#555"/></symbol>
            <symbol id="dockclose" viewBox="0 0 12 12"><rect x=".5" y=".5" width="11" height="11" rx="2" fill="#e3e0da" stroke="#555"/><path d="M3.500 3.500l5 5M8.500 3.500l-5 5" stroke="#333" stroke-width="1.500"/></symbol>
            <symbol id="okarrow" viewBox="0 0 18 18"><path d="M1 12l6-6v3h5V1h5v13H7v3z" fill="#5d7a4c" stroke="#3c5231" stroke-width=".7"/></symbol>
            <symbol id="xmark" viewBox="0 0 16 16"><path d="M2 1l4 1 2 3 3-4 3 .5-4.500 6 4 7-3.500.5L7 10l-3 5-2.500-.5L5.500 8z" fill="#b22a2a" stroke="#551" stroke-width=".4"/></symbol>
            <symbol id="helpring" viewBox="0 0 18 18"><rect x="1" y="1" width="16" height="16" fill="#f4f4f4" stroke="#ddd"/><g fill="#d8413b"><circle cx="3" cy="3" r="2"/><circle cx="15" cy="3" r="2"/><circle cx="3" cy="15" r="2"/><circle cx="15" cy="15" r="2"/></g><path d="M3 3l4 4M15 3l-4 4M3 15l4-4M15 15l-4-4" stroke="#d8413b" stroke-width="1.500"/></symbol>
            <symbol id="greenplus" viewBox="0 0 16 16"><path d="M5.500 1h5v4.500H15v5h-4.500V15h-5v-4.500H1v-5h4.500z" fill="#cfe6c9" stroke="#3f8a45" stroke-width="1.300"/></symbol>
            <symbol id="editgrey" viewBox="0 0 16 16"><path d="M3 15l1-5 8-9 2 2-6 9z" fill="#ddd" stroke="#c5c5c0"/></symbol>
            <symbol id="minusgrey" viewBox="0 0 16 16"><rect x="1.500" y="5.500" width="13" height="5" fill="#e9e2de" stroke="#cfcac5"/></symbol>

            <symbol id="search" viewBox="0 0 14 14"><circle cx="6" cy="5.500" r="4.300" fill="none" stroke="#8b8b8b" stroke-width="1.200"/><path d="M8.500 9l3.500 4" stroke="#8b8b8b" stroke-width="1.400"/></symbol>
            <symbol id="mouse" viewBox="0 0 18 18"><path d="M3 9c0-5 1-7 4-7s5 2 5 7c.5 4-1 8-5 8s-4-4-4-8z" fill="#ddd" stroke="#222" stroke-width="1.300"/><path d="M4 5l7 8M10 4l-6 9" stroke="#222" stroke-width="1.500"/><path d="M13 3l3-1M14 6h3" stroke="#444"/></symbol>
            <symbol id="lock" viewBox="0 0 14 18"><path d="M3 8V5c0-4 8-4 8 0v3" fill="none" stroke="#999" stroke-width="1.500"/><rect x="2" y="8" width="10" height="8" rx="1" fill="#555"/></symbol>
            <symbol id="crs" viewBox="0 0 16 16"><circle cx="8" cy="8" r="7" fill="#c9c9c6" stroke="#777"/><path d="M1 6h14M1 10h14M8 1c-4 4-4 10 0 14M8 1c4 4 4 10 0 14" fill="none" stroke="#666"/></symbol>
            <symbol id="bubble" viewBox="0 0 18 18"><path d="M9 1c5 0 8 2.500 8 7s-3 7-6 7c-.5 1.500-1 2-2 2v-2c-4 0-8-2.500-8-7s3-7 8-7z" fill="#4d4d4d"/><circle cx="5" cy="8" r="1.300" fill="#fff"/><circle cx="9" cy="8" r="1.300" fill="#fff"/><circle cx="13" cy="8" r="1.300" fill="#fff"/></symbol>
        </defs>
    </svg>

    <div class="desktop">
        <div class="gnome-bar">
            <span class="gnome-text activities">Atividades</span>
            <span class="app-menu">
                <svg class="app-logo"><use href="#qgis"/></svg>
                <span class="gnome-text">QGIS3</span>
                <span class="gnome-arrow"></span>
            </span>
            <div class="tray">
                <span class="tray-slot s33"><svg class="i22"><use href="#triss"/></svg></span>
                <span class="tray-slot s33"><svg class="i18"><use href="#menulines"/></svg></span>
                <span class="tray-slot s35"><svg class="i24"><use href="#skype"/></svg></span>
                <span class="tray-slot s33"><svg class="i24"><use href="#netcomp"/></svg></span>
                <span class="tray-slot s31"><svg class="i16"><use href="#chatgreen"/></svg></span>
                <span class="tray-slot s29"><svg class="i16"><use href="#sysmon"/></svg></span>
            </div>
            <span class="gnome-text clock">sex, 24 de mai, 10:16:21</span>
            <span class="clock-dot"></span>
            <svg class="i16 net"><use href="#network"/></svg>
            <svg class="i16 vol"><use href="#volume"/></svg>
            <svg class="i16 pow"><use href="#power"/></svg>
            <span class="gnome-arrow last"></span>
        </div>

        <div class="titlebar">
            <span class="title-text">projeto_qgis - QGIS exported</span>
            <div class="win-buttons">
                <span class="win-btn">&#8211;</span>
                <span class="win-btn sq"></span>
                <span class="win-btn">&#215;</span>
            </div>
        </div>

        <div class="menubar">
            <span>Pro<u>j</u>ect</span>
            <span><u>E</u>dit</span>
            <span><u>V</u>iew</span>
            <span><u>L</u>ayer</span>
            <span><u>S</u>ettings</span>
            <span><u>P</u>lugins</span>
            <span>Vect<u>o</u>r</span>
            <span><u>R</u>aster</span>
            <span><u>D</u>atabase</span>
            <span><u>W</u>eb</span>
            <span><u>M</u>esh</span>
            <span>Pro<u>c</u>essing</span>
            <span><u>H</u>elp</span>
        </div>

        <div class="toolbar">
            <span class="grip"></span>
            <span class="tool"><svg class="ic"><use href="#new"/></svg></span>
            <span class="tool"><svg class="ic"><use href="#open"/></svg></span>
            <span class="tool"><svg class="ic"><use href="#save"/></svg></span>
            <span class="tool"><svg class="ic"><use href="#newlayout"/></svg></span>
            <span class="tool"><svg class="ic"><use href="#layoutmgr"/></svg></span>
            <span class="tool"><svg class="ic"><use href="#style"/></svg></span>
            <span class="grip"></span>
            <span class="tool active"><svg class="ic"><use href="#hand"/></svg></span>
            <span class="tool"><svg class="ic"><use href="#pansel"/></svg></span>
            <span class="tool"><svg class="ic"><use href="#zoomin"/></svg></span>
            <span class="tool"><svg class="ic"><use href="#zoomout"/></svg></span>
            <span class="tool off"><svg class="ic"><use href="#zoom11"/></svg></span>
            <span class="tool"><svg class="ic"><use href="#zoomfull"/></svg></span>
            <span class="tool"><svg class="ic"><use href="#zoomsel"/></svg></span>
            <span class="tool"><svg class="ic"><use href="#zoomlayer"/></svg></span>
            <span class="tool"><svg class="ic"><use href="#zoomlast"/></svg></span>
            <span class="tool off"><svg class="ic"><use href="#zoomnext"/></svg></span>
            <span class="tool"><svg class="ic"><use href="#bmnew"/></svg></span>
            <span class="tool"><svg class="ic"><use href="#bmshow"/></svg></span>
            <span class="tool"><svg class="ic"><use href="#bmlist"/></svg></span>
            <span class="tool"><svg class="ic"><use href="#refresh"/></svg></span>
            <span class="grip"></span>
            <span class="tool"><svg class="ic"><use href="#identify"/></svg></span>
            <span class="tool off"><svg class="ic"><use href="#action"/></svg></span><span class="drop off"></span>
            <span class="tool"><svg class="ic"><use href="#select"/></svg></span><span class="drop"></span>
            <span class="tool"><svg class="ic"><use href="#selectform"/></svg></span><span class="drop"></span>
            <span class="tool"><svg class="ic"><use href="#deselect"/></svg></span>
            <span class="tool"><svg class="ic"><use href="#attr"/></svg></span>
            <span class="tool"><svg class="ic"><use href="#stats"/></svg></span>
            <span class="tool"><svg class="ic"><use href="#toolbox"/></svg></span>
            <span class="tool"><svg class="ic"><use href="#sigma"/></svg></span>
            <span class="tool"><svg class="ic"><use href="#ruler"/></svg></span><span class="drop"></span>
            <span class="tool"><svg class="ic"><use href="#note"/></svg></span>
            <span class="tool"><svg class="ic"><use href="#textann"/></svg></span><span class="drop"></span>
        </div>

        <div class="toolbar second">
            <span class="grip"></span>
            <span class="tool"><svg class="ic"><use href="#addlayers"/></svg></span>
            <span class="tool"><svg class="ic"><use href="#gpkg"/></svg></span>
            <span class="tool"><svg class="ic"><use href="#vline"/></svg></span>
            <span class="tool"><svg class="ic"><use href="#feathernew"/></svg></span>
            <span class="tool"><svg class="ic"><use href="#chip"/></svg></span>
            <span class="sep"></span>
            <span class="tool"><svg class="ic"><use href="#vbox"/></svg></span>
            <span class="grip"></span>
            <span class="tool off"><svg class="ic"><use href="#pencils"/></svg></span>
            <span class="tool"><svg class="ic"><use href="#pencil"/></svg></span>
            <span class="tool off"><svg class="ic"><use href="#editsave"/></svg></span>
            <span class="tool off"><svg class="ic"><use href="#blob"/></svg></span>
            <span class="tool off"><svg class="ic"><use href="#vtool"/></svg></span><span class="drop off"></span>
            <span class="tool off"><svg class="ic"><use href="#edittable"/></svg></span>
            <span class="tool off"><svg class="ic"><use href="#trash"/></svg></span>
            <span class="tool off"><svg class="ic"><use href="#scissors"/></svg></span>
            <span class="tool off"><svg class="ic"><use href="#copy"/></svg></span>
            <span class="tool off"><svg class="ic"><use href="#paste"/></svg></span>
            <span class="tool off"><svg class="ic"><use href="#undo"/></svg></span>
            <span class="tool off"><svg class="ic"><use href="#redo"/></svg></span>
            <span class="grip"></span>
            <span class="tool"><svg class="ic"><use href="#abc"/></svg></span>
            <span class="tool"><svg class="ic"><use href="#chart"/></svg></span>
            <span class="tool"><svg class="ic"><use href="#abcpin"/></svg></span>
            <span class="tool off"><svg class="ic"><use href="#abcpin2"/></svg></span>
            <span class="tool off"><svg class="ic"><use href="#abceye"/></svg></span>
            <span class="tool off"><svg class="ic"><use href="#abcmove"/></svg></span>
            <span class="tool off"><svg class="ic"><use href="#abcrot"/></svg></span>
            <span class="tool off"><svg class="ic"><use href="#abcedit"/></svg></span>
            <span class="grip"></span>
            <span class="tool"><svg class="ic"><use href="#bikeglobe"/></svg></span>
            <span class="grip"></span>
            <span class="tool"><svg class="ic"><use href="#python"/></svg></span>
            <span class="grip"></span>
            <span class="tool"><svg class="ic"><use href="#helpbook"/></svg></span>
            <span class="grip"></span>
        </div>

        <div class="workspace">
            <div class="side-panel">
                <div class="dock-title">
                    <span class="dock-name">Browser</span>
                    <span class="dock-btns">
                        <svg class="i12"><use href="#dockfloat"/></svg>
                        <svg class="i12"><use href="#dockclose"/></svg>
                    </span>
                </div>
                <div class="dock-tools">
                    <svg class="dt"><use href="#addrect"/></svg>
                    <svg class="dt"><use href="#refresh"/></svg>
                    <svg class="dt"><use href="#filter"/></svg>
                    <svg class="dt"><use href="#collapseup"/></svg>
                    <svg class="dt"><use href="#info"/></svg>
                </div>
                <div class="tree browser-tree">
                    <div class="row"><span class="tw open"></span><svg class="ti"><use href="#homefolder"/></svg><span>Home</span></div>
                    <div class="row l1"><span class="tw closed"></span><svg class="ti"><use href="#folder"/></svg><span>workspace</span></div>
                    <div class="row"><span class="tw closed"></span><svg class="ti"><use href="#folder"/></svg><span>/</span></div>
                    <div class="row"><span class="tw"></span><svg class="ti"><use href="#gpkgbox"/></svg><span>GeoPackage</span></div>
                    <div class="row"><span class="tw"></span><svg class="ti"><use href="#feather"/></svg><span>SpatiaLite</span></div>
                    <div class="row"><span class="tw open"></span><svg class="ti"><use href="#elephant"/></svg><span>PostGIS</span></div>
                    <div class="row l1"><span class="tw closed"></span><svg class="ti"><use href="#conn"/></svg><span>local</span></div>
                    <div class="row"><span class="tw closed"></span><svg class="ti"><use href="#sql"/></svg><span>MSSQL</span></div>
                    <div class="row"><span class="tw closed"></span><svg class="ti"><use href="#db2"/></svg><span>DB2</span></div>
                    <div class="row"><span class="tw open"></span><svg class="ti"><use href="#globe"/></svg><span>WMS/WMTS</span></div>
                    <div class="row l1 selected"><span class="tw open"></span><svg class="ti"><use href="#conn"/></svg><span>Mapserver Demo</span></div>
                    <div class="row l2"><span class="tw closed"></span><svg class="ti"><use href="#globe"/></svg><span>WMS Demo Server for MapServer</span></div>
                    <div class="row l1"><span class="tw closed"></span><svg class="ti"><use href="#conn"/></svg><span>QGIS Server Demo - Alaska</span></div>
                    <div class="row"><span class="tw open"></span><svg class="ti"><use href="#globe"/></svg><span>XYZ Tiles</span></div>
                    <div class="row l1"><span class="tw"></span><svg class="ti"><use href="#tiles"/></svg><span>OpenStreetMap</span></div>
                    <div class="row"><span class="tw"></span><svg class="ti"><use href="#wcs"/></svg><span>WCS</span></div>
                    <div class="row"><span class="tw"></span><svg class="ti"><use href="#wfs"/></svg><span>WFS</span></div>
                    <div class="row"><span class="tw open"></span><svg class="ti"><use href="#ows"/></svg><span>OWS</span></div>
                    <div class="row l1"><span class="tw closed"></span><svg class="ti"><use href="#conn"/></svg><span>Mapserver Demo</span></div>
                </div>
                <div class="splitter"></div>
                <div class="dock-title"><span class="dock-name">Layers</span></div>
                <div class="dock-tools layers-tools">
                    <svg class="dt"><use href="#brush"/></svg>
                    <svg class="dt"><use href="#addgroup"/></svg>
                    <svg class="dt"><use href="#eye"/></svg>
                    <svg class="dt"><use href="#filter"/></svg>
                    <svg class="dt"><use href="#epsilon"/></svg><span class="drop small"></span>
                    <svg class="dt"><use href="#expanddown"/></svg>
                    <svg class="dt"><use href="#collapseup"/></svg>
                    <svg class="dt"><use href="#removegroup"/></svg>
                </div>
                <div class="tree layer-tree">
                    <div class="row layer selected"><span class="tw"></span><span class="check on"></span><span class="swatch purple"></span><b class="cur">LOTE_CTM</b></div>
                    <div class="row layer"><span class="tw"></span><span class="check"></span><span class="swatch orange"></span><b class="hidden-layer">LIMITE_MUNICIPIO</b></div>
                    <div class="row layer"><span class="tw open"></span><span class="check"></span><svg class="swatch-ic"><use href="#tiles"/></svg><b class="hidden-layer">OpenStreetMap</b></div>
                </div>
            </div>

            <div class="map-canvas">
                <svg class="map" viewBox="394 154 1044 715" preserveAspectRatio="xMinYMin meet">
                    <path class="lot" d="M700 205 L795 172 Q800 169 804 172 L844.700 238.700 L939.300 395.700 L971 451 L1063.300 612.700 L1106.700 687.300 L1115.300 683 L1203.300 836.700 Q1206 842 1204.500 846 Q1202 853 1193.300 852.700 L1011.700 806 L1012.300 800 L932.300 779.300 L915.300 775.700 L852.700 663 L827.300 616.700 L829 616 L824.300 606.700 L793.300 552.300 L769 515 L700 400 Z"/>
                    <path class="lot-line" d="M844.700 238.700L700 322M939.300 395.700L870 436L700 533M870 436L901 491M971 451L901 491L875 505L793.300 552.300M875 505L905.700 558.300M824.300 606.700L913.300 554.700L945.700 611L973.300 657L972 662L947 726L932.300 779.300M945.700 611L852.700 663M972 662L1063.300 612.700M1115.300 683L1029.700 731.700L1011.700 806"/>
                </svg>
            </div>
        </div>

        <div class="statusbar">
            <div class="locator"><svg class="i14"><use href="#search"/></svg><span>Type to locate (Ctrl+K)</span></div>
            <span class="st-label coord-label">Coordinate</span>
            <span class="st-input coord-input">611298.9,7796410.9</span>
            <svg class="i18 mouse-ic"><use href="#mouse"/></svg>
            <span class="st-label scale-label">Scale</span>
            <span class="st-input scale-input">1:1143<span class="st-combo"></span></span>
            <svg class="i18 lock-ic"><use href="#lock"/></svg>
            <span class="st-label mag-label">Magnifier</span>
            <span class="st-input mag-input">100%<span class="spin"></span></span>
            <span class="st-label rot-label">Rotation</span>
            <span class="st-input rot-input">0.0 &#176;<span class="spin"></span></span>
            <span class="check on small-check"></span>
            <span class="st-label render-label">Render</span>
            <svg class="i16 crs-ic"><use href="#crs"/></svg>
            <span class="st-label epsg-label">EPSG:31983</span>
            <svg class="i16 msg-ic"><use href="#bubble"/></svg>
        </div>

        <!-- floating dialog -->
        <div class="dialog">
            <div class="dlg-title">
                <span>Create a New WMS/WMTS Connection</span>
                <span class="dlg-close">&#215;</span>
            </div>
            <div class="dlg-body">
                <div class="group-title first">Connection Details</div>
                <div class="group outer">
                    <div class="form-row">
                        <label class="name-label">Name</label>
                        <div class="line-edit focus">Mapserver Demo<span class="caret"></span></div>
                    </div>
                    <div class="form-row">
                        <label class="name-label">URL</label>
                        <div class="line-edit">http://demo.mapserver.org/cgi-bin/wms</div>
                    </div>

                    <div class="group-title inner">Authentication</div>
                    <div class="group auth">
                        <div class="tabs">
                            <span class="tab current">Configurations</span>
                            <span class="tab">Basic</span>
                        </div>
                        <div class="tab-pane">
                            <div class="pane-line">Choose or create an authentication configuration</div>
                            <div class="auth-row">
                                <div class="combo auth-combo">No authentication<span class="combo-arrow"></span></div>
                                <span class="mini-btn"><svg class="i16"><use href="#editgrey"/></svg></span>
                                <span class="mini-btn"><svg class="i16"><use href="#minusgrey"/></svg></span>
                                <span class="mini-btn"><svg class="i16"><use href="#greenplus"/></svg></span>
                            </div>
                            <p class="auth-note">Configurations store encrypted credentials in the QGIS authentication database.</p>
                        </div>
                    </div>

                    <div class="group-title inner">WMS/WMTS Options</div>
                    <div class="group options">
                        <div class="form-row opt">
                            <label class="opt-label"><u>R</u>eferer</label>
                            <div class="line-edit"></div>
                        </div>
                        <div class="form-row opt">
                            <label class="opt-label">DPI-<u>M</u>ode</label>
                            <div class="combo wide">all<span class="combo-arrow"></span></div>
                        </div>
                        <div class="check-list">
                            <div class="check-row"><span class="check"></span>Ignore GetMap/GetTile URI reported in capabilities</div>
                            <div class="check-row"><span class="check"></span>Ignore GetFeatureInfo URI reported in capabilities</div>
                            <div class="check-row"><span class="check"></span>Ignore axis orientation (WMS 1.3/WMTS)</div>
                            <div class="check-row"><span class="check"></span>Invert axis orientation</div>
                            <div class="check-row"><span class="check"></span>Smooth pixmap transform</div>
                        </div>
                    </div>
                </div>
                <div class="dlg-buttons">
                    <span class="btn default"><svg class="i18"><use href="#okarrow"/></svg>OK</span>
                    <span class="btn"><svg class="i16"><use href="#xmark"/></svg>Cancel</span>
                    <span class="btn"><svg class="i18"><use href="#helpring"/></svg>Help</span>
                </div>
            </div>
            <span class="size-grip"></span>
        </div>
    </div>
</body>
</html>
```

FILE: styles.css
```css
* {
    box-sizing: border-box;
}

html, body {
    margin: 0;
    height: 100%;
    overflow: hidden;
}

body {
    font-family: "DejaVu Sans", sans-serif;
    font-size: 12px;
    color: #333;
    background-color: #eeebe6;
}

.sheet {
    position: absolute;
    width: 0;
    height: 0;
}

svg {
    display: block;
    flex: none;
}

.i12 { width: 12px; height: 12px; }
.i14 { width: 14px; height: 14px; }
.i16 { width: 16px; height: 16px; }
.i18 { width: 18px; height: 18px; }
.i22 { width: 22px; height: 22px; }
.i24 { width: 24px; height: 24px; }

/* text inside icons */
.svg-a { font: 12px "DejaVu Sans", sans-serif; fill: #666; }
.svg-11 { font: bold 7px "DejaVu Sans", sans-serif; fill: #666; text-anchor: middle; }
.svg-i { font: italic bold 14px "Liberation Serif", serif; fill: #fff; text-anchor: middle; }
.svg-i.small { font-size: 11px; }
.svg-t { font: bold 14px "Liberation Serif", serif; fill: #444; text-anchor: middle; }
.svg-abc { font: bold 9px "DejaVu Sans", sans-serif; fill: #222; text-anchor: middle; }
.svg-abc.grey { fill: #999; }
.svg-q { font: bold 14px "Liberation Serif", serif; fill: #fff; text-anchor: middle; }
.svg-db2 { font: 6px "DejaVu Sans", sans-serif; fill: #fff; text-anchor: middle; }

.desktop {
    position: relative;
    width: 1440px;
    height: 900px;
    display: flex;
    flex-direction: column;
}

/* gnome shell bar */
.gnome-bar {
    height: 27px;
    display: flex;
    align-items: center;
    padding: 0 9px 0 12px;
    background: linear-gradient(#56534c, #41403b);
}

.gnome-text {
    font-size: 14px;
    color: #d9d5cc;
    white-space: nowrap;
    -webkit-text-stroke: 0.3px #d9d5cc;
}

.activities {
    letter-spacing: 0.3px;
}

.app-menu {
    display: flex;
    align-items: center;
    margin-left: 19px;
}

.app-logo {
    width: 18px;
    height: 18px;
    margin-right: 5px;
}

.gnome-arrow {
    width: 0;
    height: 0;
    margin-left: 6px;
    border-left: 5px solid transparent;
    border-right: 5px solid transparent;
    border-top: 5px solid #c9c5bc;
}

.gnome-arrow.last {
    margin-left: 10px;
}

.tray {
    display: flex;
    margin-left: auto;
}

.tray-slot {
    display: flex;
    justify-content: center;
    align-items: center;
}

.s29 { width: 29px; }
.s31 { width: 31px; }
.s33 { width: 33px; }
.s35 { width: 35px; }

.clock {
    width: 163px;
    margin-left: 19px;
    font-size: 13.100px;
}

.clock-dot {
    width: 8px;
    height: 8px;
    margin-left: 4px;
    border-radius: 50%;
    background-color: #d9d5cc;
}

.net { margin-left: 20px; }
.vol { margin-left: 12px; }
.pow { margin-left: 13px; }

/* window title */
.titlebar {
    position: relative;
    height: 28px;
    display: flex;
    align-items: center;
    justify-content: center;
    background-color: #3e3d38;
}

.title-text {
    font-size: 12.750px;
    font-weight: bold;
    color: #a8a59c;
}

.win-buttons {
    position: absolute;
    right: 5px;
    top: 6px;
    display: flex;
    gap: 4px;
}

.win-btn {
    width: 16px;
    height: 16px;
    border-radius: 50%;
    background-color: #5d5c56;
    color: #3e3d38;
    font-size: 13px;
    line-height: 15px;
    text-align: center;
}

.win-btn.sq::after {
    content: "";
    display: block;
    width: 8px;
    height: 6px;
    margin: 5px 4px;
    border: 1px solid #3e3d38;
}

.menubar {
    height: 19px;
    display: flex;
    align-items: center;
    gap: 14.650px;
    padding-left: 10px;
    background-color: #eeebe6;
    color: #2b2b2b;
    white-space: nowrap;
}

.toolbar {
    height: 39px;
    display: flex;
    align-items: center;
    padding-left: 0;
    border-top: 1px solid #d8d5cf;
    background: linear-gradient(#f6f4f0, #edeae5);
}

.toolbar.second {
    height: 40px;
    border-top: 1px solid #bab6b0;
    border-bottom: 2px solid #bab6b0;
}

.tool {
    width: 33px;
    height: 31px;
    display: flex;
    align-items: center;
    justify-content: center;
    border: 1px solid transparent;
    border-radius: 3px;
}

.tool.active {
    background-color: #dedbd6;
    border-color: #aaa7a1;
}

.tool.off {
    filter: grayscale(1) opacity(.45);
}

.ic {
    width: 24px;
    height: 24px;
}

.grip {
    width: 16px;
    height: 18px;
    flex: none;
    background-image: radial-gradient(circle, #a9a69f 0.7px, transparent 0.9px);
    background-size: 3px 3px;
    background-position: center;
    background-repeat: repeat;
    background-clip: content-box;
    padding: 0 5px;
}

.toolbar > .grip:first-child {
    width: 12.500px;
    padding: 0 3px;
}

.drop {
    width: 12px;
    height: 5px;
    flex: none;
    position: relative;
}

.drop::after {
    content: "";
    position: absolute;
    left: 1px;
    top: 0;
    border-left: 5px solid transparent;
    border-right: 5px solid transparent;
    border-top: 5px solid #333;
}

.drop.off {
    opacity: .2;
}

.sep {
    width: 7px;
    height: 24px;
    flex: none;
    background: linear-gradient(#cfccc6, #cfccc6) center / 1px 100% no-repeat;
}

/* main area */
.workspace {
    flex: 1;
    display: flex;
    min-height: 0;
}

.side-panel {
    width: 387px;
    display: flex;
    flex-direction: column;
}

.dock-title {
    height: 18px;
    flex: none;
    display: flex;
    align-items: center;
    justify-content: space-between;
    padding: 0 2px 0 4px;
    color: #333;
}

.dock-name {
    margin-top: 2px;
}

.dock-btns {
    display: flex;
    gap: 2px;
}

.dock-tools {
    height: 32px;
    flex: none;
    display: flex;
    align-items: center;
    gap: 7px;
    padding-left: 7px;
}

.dt {
    width: 18px;
    height: 18px;
}

.drop.small {
    width: 8px;
    margin-left: -3px;
}

.tree {
    background-color: #fff;
    border: 1px solid #b5b1aa;
    overflow: hidden;
}

.browser-tree {
    height: 342px;
    flex: none;
    border-bottom-width: 1px;
}

.layer-tree {
    flex: 1;
}

.splitter {
    height: 6px;
    flex: none;
    background: radial-gradient(circle, #aaa7a0 0.6px, transparent 0.8px) center 1px / 3px 3px repeat-x;
    background-size: 3px 3px;
    background-clip: content-box;
    padding: 0 184px 0 186px;
}

.row {
    height: 18px;
    display: flex;
    align-items: center;
    white-space: nowrap;
    color: #2b2b2b;
}

.row > span:last-child,
.row > b {
    margin-top: 2px;
}

.row.l1 { padding-left: 20px; }
.row.l2 { padding-left: 40px; }

.row.l1.selected {
    width: 290px;
}

.row.selected {
    background-color: #308cc6;
    color: #fff;
}

.tw {
    width: 20px;
    height: 18px;
    flex: none;
    position: relative;
}

.tw.open::after {
    content: "";
    position: absolute;
    left: 5px;
    top: 7px;
    border-left: 5px solid transparent;
    border-right: 5px solid transparent;
    border-top: 5px solid #3c3c3c;
}

.tw.closed::after {
    content: "";
    position: absolute;
    left: 7px;
    top: 4px;
    border-top: 5px solid transparent;
    border-bottom: 5px solid transparent;
    border-left: 5px solid #3c3c3c;
}

.ti {
    width: 16px;
    height: 16px;
    margin: 0 6px 0 3px;
}

.check {
    width: 14px;
    height: 14px;
    flex: none;
    position: relative;
    background-color: #fff;
    border: 1px solid #b5b2ac;
    border-radius: 1px;
}

.check.on::after {
    content: "";
    position: absolute;
    left: 3px;
    top: 0;
    width: 5px;
    height: 10px;
    border-right: 2px solid #222;
    border-bottom: 2px solid #222;
    transform: rotate(38deg);
}

.row.layer .tw {
    width: 23px;
}

.swatch {
    width: 16px;
    height: 16px;
    flex: none;
    margin: 0 6px 0 6px;
    border: 1px solid #7d5c5c;
}

.swatch.purple {
    background-color: #b39db9;
    border-color: #8d7f90;
}

.swatch.orange {
    background-color: #e8734a;
    border-color: #a5502f;
}

.swatch-ic {
    width: 14px;
    height: 14px;
    margin: 0 7px 0 8px;
}

.cur {
    text-decoration: underline;
}

.hidden-layer {
    font-style: italic;
    color: #808080;
}

.map-canvas {
    flex: 1;
    margin-left: 6px;
    background-color: #fff;
    border: 1px solid #b5b1aa;
    border-top-width: 1px;
    border-right: 0;
    overflow: hidden;
}

.map {
    width: 100%;
    height: 100%;
}

.lot {
    fill: #f3a6b2;
    stroke: #3f3f3f;
    stroke-width: 1;
}

.lot-line {
    fill: none;
    stroke: #3f3f3f;
    stroke-width: 1;
}

/* status bar */
.statusbar {
    height: 30px;
    flex: none;
    display: flex;
    align-items: center;
    padding: 0 0 0 4px;
    background-color: #eeebe6;
    font-size: 9px;
    white-space: nowrap;
}

.locator {
    width: 248px;
    height: 22px;
    display: flex;
    align-items: center;
    gap: 7px;
    padding-left: 7px;
    background-color: #fff;
    border: 1px solid #b9b6b0;
    border-radius: 2px;
    color: #8b8b8b;
    font-size: 12px;
}

.st-input {
    position: relative;
    height: 22px;
    display: flex;
    align-items: center;
    padding-left: 4px;
    background-color: #fff;
    border: 1px solid #b9b6b0;
    border-radius: 2px;
}

.coord-label { margin-left: 354px; }
.coord-input { width: 108px; margin-left: 4px; padding-left: 6px; }
.mouse-ic { margin-left: 5px; }
.scale-label { margin-left: 12px; }
.scale-input { width: 95px; margin-left: 5px; }
.lock-ic { margin-left: 9px; width: 18px; }
.mag-label { margin-left: 6px; }
.mag-input { width: 94px; margin-left: 4px; }
.rot-label { margin-left: 10px; }
.rot-input { width: 89px; margin-left: 10px; }
.small-check { margin-left: 8px; width: 13px; height: 14px; }
.render-label { margin-left: 5px; }
.crs-ic { margin-left: 18px; }
.epsg-label { margin-left: 4px; }
.msg-ic { margin-left: 20px; }

.st-combo {
    position: absolute;
    right: 0;
    top: 0;
    width: 20px;
    height: 100%;
    border-left: 1px solid #c9c6c0;
    background-color: #eeebe6;
}

.st-combo::after {
    content: "";
    position: absolute;
    left: 5px;
    top: 8px;
    border-left: 4px solid transparent;
    border-right: 4px solid transparent;
    border-top: 5px solid #555;
}

.spin {
    position: absolute;
    right: 0;
    top: 0;
    width: 13px;
    height: 100%;
    border-left: 1px solid #c9c6c0;
    background-color: #f0eee9;
}

.spin::before,
.spin::after {
    content: "";
    position: absolute;
    left: 2px;
    border-left: 4px solid transparent;
    border-right: 4px solid transparent;
}

.spin::before {
    top: 3px;
    border-bottom: 5px solid #555;
}

.spin::after {
    bottom: 3px;
    border-top: 5px solid #555;
}

/* dialog */
.dialog {
    position: absolute;
    left: 321px;
    top: 183px;
    width: 448px;
    height: 625px;
    background-color: #eeebe6;
    border-radius: 6px 6px 0 0;
    box-shadow: 0 5px 20px rgba(0, 0, 0, 0.5);
}

.dlg-title {
    position: relative;
    height: 30px;
    display: flex;
    align-items: center;
    justify-content: center;
    padding-right: 0;
    background: linear-gradient(#56534c, #3f3e39);
    border-radius: 6px 6px 0 0;
    color: #dedad2;
    font-size: 13px;
    font-weight: bold;
}

.dlg-close {
    position: absolute;
    right: 6px;
    top: 7px;
    width: 16px;
    height: 16px;
    border-radius: 50%;
    background-color: #e9572a;
    color: #4a2514;
    font-size: 15px;
    line-height: 15px;
    text-align: center;
    font-weight: normal;
}

.dlg-body {
    padding: 0 11px 11px 11px;
}

.group-title {
    height: 16px;
    line-height: 16px;
    margin-bottom: 2px;
}

.group-title.first {
    margin-top: 12px;
}

.group-title.inner {
    margin-top: 8px;
}

.group {
    background-color: #ebe8e3;
    border: 1px solid #dcd8d2;
}

.group.outer {
    margin-left: 1px;
    padding: 13px 13px 14px 12px;
}

.form-row {
    height: 23px;
    display: flex;
    align-items: center;
    margin-bottom: 8px;
}

.name-label {
    width: 52px;
    flex: none;
    padding-left: 5px;
}

.line-edit {
    flex: 1;
    height: 23px;
    display: flex;
    align-items: center;
    padding-left: 2px;
    background-color: #fff;
    border: 1px solid #b9b6b0;
    border-radius: 2px;
}

.line-edit.focus {
    border-color: #2c6f9f;
}

.caret {
    width: 1px;
    height: 14px;
    background-color: #111;
}

.group.auth {
    margin-left: 1px;
    padding: 7px 8px 8px 7px;
    background-color: #e9e6e1;
}

.tabs {
    height: 26px;
    display: flex;
    align-items: flex-end;
}

.tab {
    height: 24px;
    width: 56px;
    display: flex;
    align-items: center;
    justify-content: center;
    background-color: #e6e3de;
    border: 1px solid #c8c5bf;
    border-bottom: 0;
    border-radius: 2px 2px 0 0;
}

.tab.current {
    width: 112px;
    height: 27px;
    margin-bottom: -1px;
    position: relative;
    z-index: 1;
    background-color: #fbf8f4;
    border-color: #aaa7a1;
}

.tab-pane {
    height: 133px;
    padding: 6px 7px 0;
    background-color: #fbf8f4;
    border: 1px solid #aaa7a1;
}

.pane-line {
    height: 16px;
    line-height: 16px;
}

.auth-row {
    height: 23px;
    display: flex;
    gap: 6px;
    margin-top: 5px;
}

.combo {
    position: relative;
    height: 23px;
    display: flex;
    align-items: center;
    padding-left: 4px;
    background: linear-gradient(#fbf9f6, #ece9e4);
    border: 1px solid #b9b6b0;
    border-radius: 2px;
}

.auth-combo {
    width: 136px;
}

.combo.wide {
    flex: 1;
}

.combo-arrow {
    position: absolute;
    right: 5px;
    top: 9px;
    border-left: 4px solid transparent;
    border-right: 4px solid transparent;
    border-top: 4px solid #444;
}

.mini-btn {
    width: 24px;
    height: 23px;
    display: flex;
    align-items: center;
    justify-content: center;
    background: linear-gradient(#f8f6f2, #ebe8e3);
    border: 1px solid #c3c0ba;
    border-radius: 2px;
}

.auth-note {
    margin: 16px 0 0;
    line-height: 14px;
}

.group.options {
    margin-left: 1px;
    padding: 12px 13px 0 12px;
    height: 213px;
    background-color: #e9e6e1;
}

.form-row.opt {
    height: 22px;
    margin-bottom: 7px;
}

.opt-label {
    width: 63px;
    flex: none;
}

.form-row.opt .line-edit {
    height: 22px;
}

.check-list {
    margin-top: -3px;
}

.check-row {
    height: 27px;
    display: flex;
    align-items: center;
    gap: 5px;
}

.dlg-buttons {
    display: flex;
    justify-content: flex-end;
    gap: 6px;
    margin-top: 6px;
}

.btn {
    width: 80px;
    height: 24px;
    display: flex;
    align-items: center;
    justify-content: center;
    background: linear-gradient(#fbf9f6, #ece9e4);
    border: 1px solid #b9b6b0;
    border-radius: 2px;
}

.btn .i18 {
    margin-left: -2px;
}

.btn.default {
    background: linear-gradient(#f5f7f8, #dfe5ea);
    border-color: #2c6f9f;
}

.size-grip {
    position: absolute;
    right: 1px;
    bottom: 1px;
    width: 10px;
    height: 10px;
    background: radial-gradient(circle, #bbb8b1 0.7px, transparent 0.9px) 0 0 / 3px 3px;
}
```
